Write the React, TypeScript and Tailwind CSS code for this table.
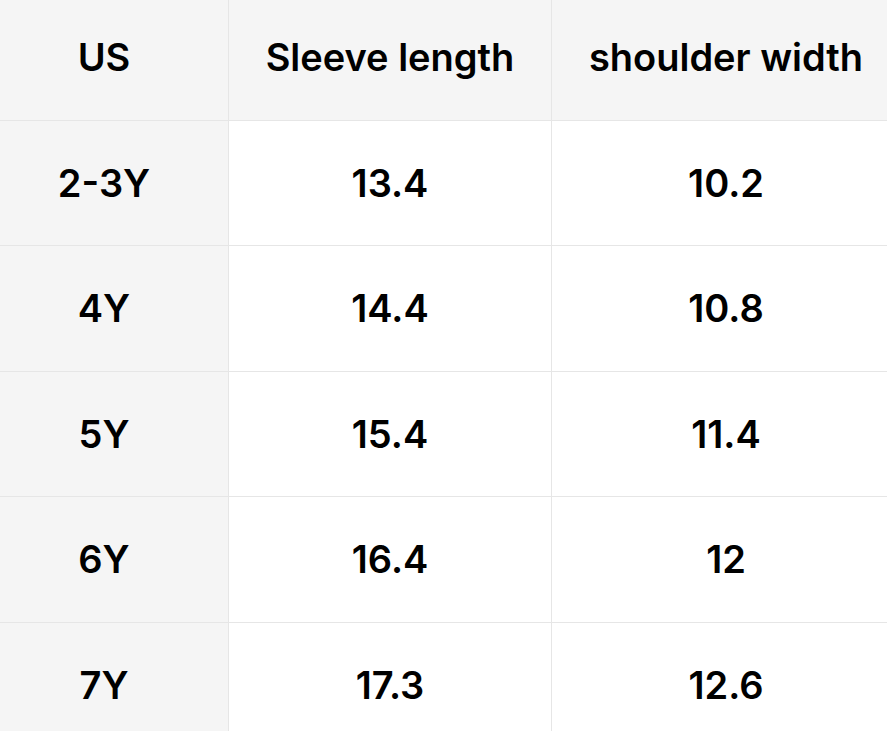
const ROWS = [
  { h: "h-[125px]", us: "2-3Y", sleeve: "13.4", shoulder: "10.2" },
  { h: "h-[126px]", us: "4Y", sleeve: "14.4", shoulder: "10.8" },
  { h: "h-[125px]", us: "5Y", sleeve: "15.4", shoulder: "11.4" },
  { h: "h-[126px]", us: "6Y", sleeve: "16.4", shoulder: "12" },
  { h: "h-[126px]", us: "7Y", sleeve: "17.3", shoulder: "12.6" },
];

export default function App() {
  return (
    <div className="h-[731px] w-[887px] overflow-hidden bg-white font-['Inter',sans-serif] text-[38px] font-semibold text-black">
      <div className="-mt-[5px] -ml-[20px] grid w-[920px] grid-cols-[249px_323px_348px]">
        <div className="flex h-[126px] items-center justify-center border-r border-b border-[#e6e6e6] bg-[#f5f5f5]">US</div>
        <div className="flex h-[126px] items-center justify-center border-r border-b border-[#e6e6e6] bg-[#f5f5f5]">Sleeve length</div>
        <div className="flex h-[126px] items-center justify-center border-b border-[#e6e6e6] bg-[#f5f5f5]">shoulder width</div>
        {ROWS.map((r) => (
          <div key={r.us} className="contents">
            <div className={`flex ${r.h} items-center justify-center border-r border-b border-[#e6e6e6] bg-[#f5f5f5]`}>{r.us}</div>
            <div className={`flex ${r.h} items-center justify-center border-r border-b border-[#e6e6e6]`}>{r.sleeve}</div>
            <div className={`flex ${r.h} items-center justify-center border-b border-[#e6e6e6]`}>{r.shoulder}</div>
          </div>
        ))}
      </div>
    </div>
  );
}
